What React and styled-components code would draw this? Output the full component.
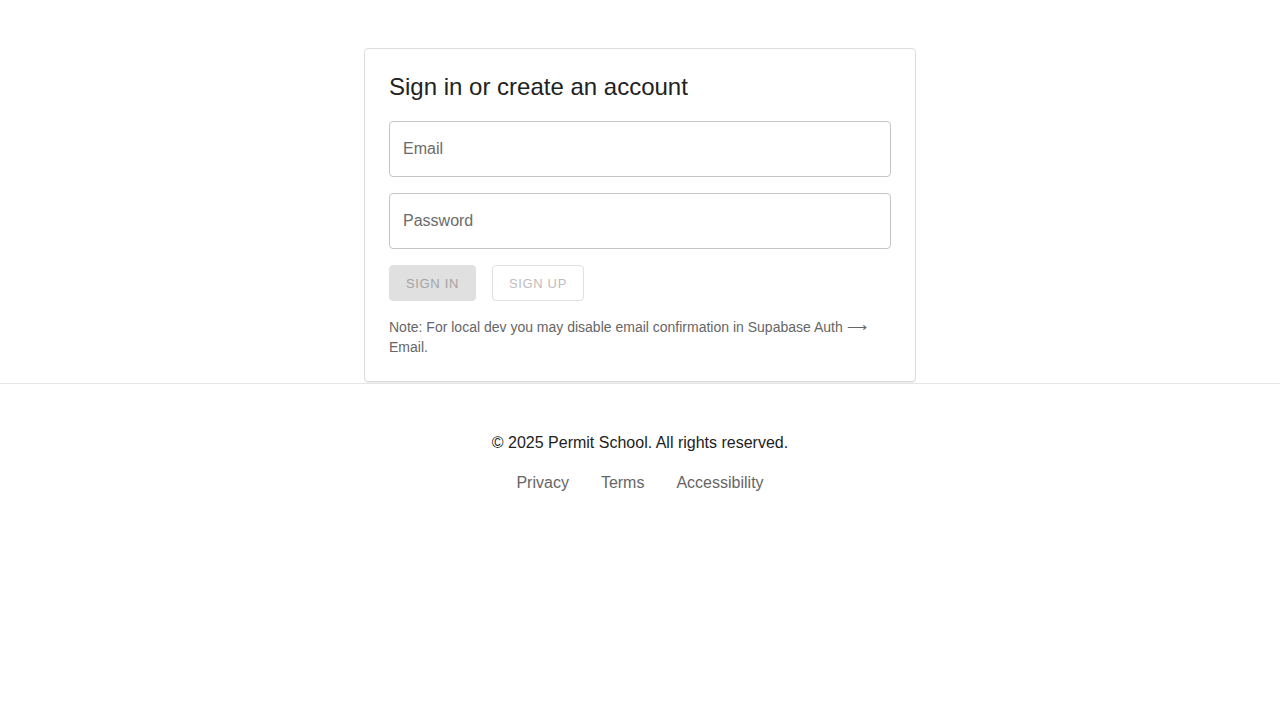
import React from 'react'
import styled, { createGlobalStyle } from 'styled-components'

const GlobalStyle = createGlobalStyle`
  html, body {
    margin: 0;
    padding: 0;
    background: #fff;
    font-family: 'Liberation Sans', Arial, sans-serif;
    color: #222;
  }
  * { box-sizing: border-box; }
`

const Main = styled.main`
  display: flex;
  justify-content: center;
  padding-top: 48px;
`

const Card = styled.section`
  width: 552px;
  border: 1px solid #ddd;
  border-radius: 4px;
  padding: 24px 24px 24px;
  display: flex;
  flex-direction: column;
  box-shadow: 0 1px 0 #ececec;
`

const Title = styled.h1`
  margin: 0 0 20px;
  font-size: 24px;
  font-weight: 400;
  line-height: 28px;
  color: #222;
`

const Form = styled.form`
  display: flex;
  flex-direction: column;
  gap: 16px;
`

const Input = styled.input`
  width: 100%;
  height: 56px;
  border: 1px solid #c4c4c4;
  border-radius: 4px;
  padding: 0 13px;
  font-family: inherit;
  font-size: 16px;
  color: #222;
  outline: none;
  &::placeholder { color: #6b6b6b; }
`

const Actions = styled.div`
  display: flex;
  gap: 16px;
`

const Button = styled.button`
  height: 36px;
  padding: 0 16px;
  border-radius: 4px;
  font-family: inherit;
  font-size: 13px;
  letter-spacing: 0.65px;
  text-transform: uppercase;
  cursor: default;
  background: ${(p) => (p.$outlined ? '#fff' : '#e0e0e0')};
  color: ${(p) => (p.$outlined ? '#bdbdbd' : '#a3a3a3')};
  border: 1px solid #e0e0e0;
`

const Note = styled.p`
  margin: 0;
  font-size: 14px;
  line-height: 20px;
  color: #666;
`

const Footer = styled.footer`
  margin-top: 1px;
  border-top: 1px solid #e6e6e6;
  padding: 47px 0 32px;
  display: flex;
  flex-direction: column;
  align-items: center;
  gap: 16px;
`

const Copy = styled.div`
  font-size: 16px;
  line-height: 24px;
  color: #222;
`

const Links = styled.nav`
  display: flex;
  gap: 32px;
`

const Link = styled.a`
  font-size: 16px;
  line-height: 24px;
  color: #666;
  text-decoration: none;
`

export default function App() {
  return (
    <>
      <GlobalStyle />
      <Main>
        <Card>
          <Title>Sign in or create an account</Title>
          <Form onSubmit={(e) => e.preventDefault()}>
            <Input type='email' placeholder='Email' />
            <Input type='password' placeholder='Password' />
            <Actions>
              <Button disabled>Sign in</Button>
              <Button $outlined disabled>Sign up</Button>
            </Actions>
            <Note>
              Note: For local dev you may disable email confirmation in Supabase Auth ⟶ Email.
            </Note>
          </Form>
        </Card>
      </Main>
      <Footer>
        <Copy>© 2025 Permit School. All rights reserved.</Copy>
        <Links>
          <Link href='#'>Privacy</Link>
          <Link href='#'>Terms</Link>
          <Link href='#'>Accessibility</Link>
        </Links>
      </Footer>
    </>
  )
}
